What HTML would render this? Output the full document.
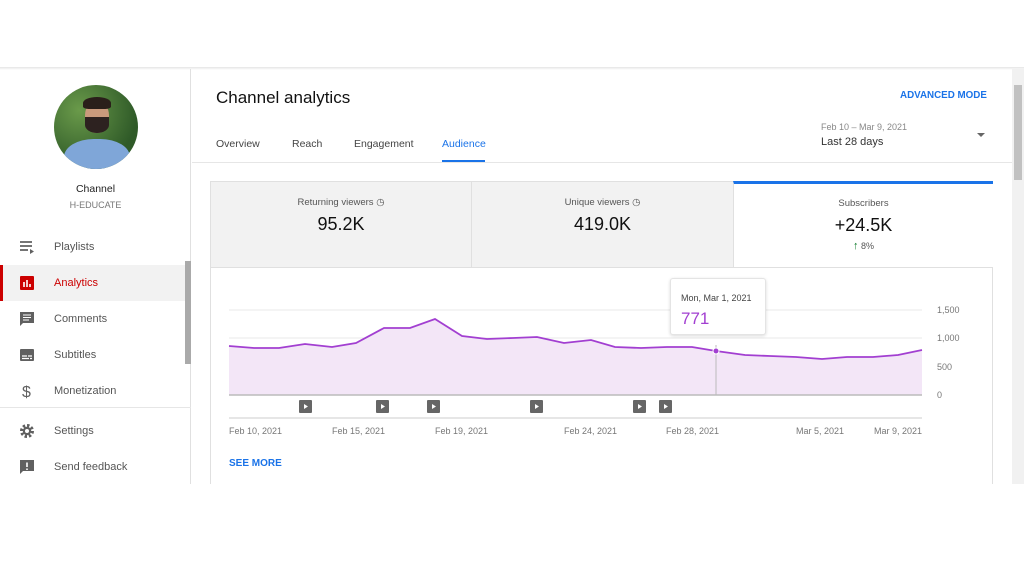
<!DOCTYPE html>
<html><head><meta charset="utf-8"><style>
*{box-sizing:border-box;margin:0;padding:0}
body{width:1024px;height:576px;background:#fff;font-family:"Liberation Sans",sans-serif;position:relative;overflow:hidden;color:#0d0d0d}
.top{position:absolute;left:0;top:67px;width:1024px;height:3px;background:linear-gradient(#e4e4e4,#fff)}
.side{position:absolute;left:0;top:69px;width:191px;height:415px;border-right:1px solid #e0e0e0}
.av{position:absolute;left:54px;top:85px;width:84px;height:84px;border-radius:50%;overflow:hidden;background:radial-gradient(circle at 30% 30%,#6a9a4a,#2f5a28 70%)}
.av .face{position:absolute;left:31px;top:16px;width:24px;height:32px;border-radius:45%;background:#c99a7c}
.av .hair{position:absolute;left:29px;top:12px;width:28px;height:12px;border-radius:50% 50% 20% 20%;background:#2a1f1a}
.av .beard{position:absolute;left:31px;top:32px;width:24px;height:16px;border-radius:0 0 50% 50%;background:#2d2220}
.av .body{position:absolute;left:10px;top:54px;width:66px;height:40px;border-radius:45% 45% 0 0;background:#7fa6d8}
.nm{position:absolute;left:0;width:191px;text-align:center}
.item{position:absolute;left:0;width:185px;height:36px;font-size:11px;color:#555}
.item span{position:absolute;left:54px;top:12px}
.item svg{position:absolute;left:19px;top:10px}
.tab{position:absolute;top:138px;font-size:10.5px;color:#444}
.card{position:absolute;left:210px;top:181px;width:783px;height:303px;border:1px solid #e0e0e0;border-bottom:none}
.m{position:absolute;top:0;height:86px;text-align:center;border-bottom:1px solid #e0e0e0}
.m .l{font-size:9.5px;color:#555;margin-top:15px}
.m .v{font-size:18px;color:#111;margin-top:6px}
.ax{position:absolute;font-size:9px;color:#777}
</style></head><body>
<div class="top"></div>
<div class="side"></div>
<div class="av"><div class="body"></div><div class="face"></div><div class="hair"></div><div class="beard"></div></div>
<div class="nm" style="top:183px;font-size:10.5px;color:#222">Channel</div>
<div class="nm" style="top:200px;font-size:9px;color:#777">H-EDUCATE</div>

<div class="item" style="top:229px"><svg width="16" height="16"><path d="M1 3h12M1 7h12M1 11h8" stroke="#606060" stroke-width="1.8"/><path d="M11 10l4 2.5-4 2.5z" fill="#606060"/></svg><span>Playlists</span></div>
<div class="item" style="top:265px;background:#f2f2f2"><div style="position:absolute;left:0;top:0;width:3px;height:36px;background:#cc0000"></div><svg width="16" height="16"><rect x="1" y="1" width="14" height="14" rx="1" fill="#cc0000"/><path d="M5 7v5M8 5v7M11 9v3" stroke="#fff" stroke-width="1.6"/></svg><span style="color:#cc0000">Analytics</span></div>
<div class="item" style="top:301px"><svg width="16" height="16"><path d="M1 1h14v11H4l-3 3z" fill="#606060"/><path d="M4 4h8M4 6.5h8M4 9h6" stroke="#fff" stroke-width="1"/></svg><span>Comments</span></div>
<div class="item" style="top:337px"><svg width="16" height="16"><rect x="1" y="2" width="14" height="12" rx="1" fill="#606060"/><path d="M3 9h5M9 9h4M3 11.5h7M11 11.5h2" stroke="#fff" stroke-width="1.2"/></svg><span>Subtitles</span></div>
<div class="item" style="top:373px"><svg width="16" height="16"><text x="3" y="14" font-size="16" fill="#606060" font-family="Liberation Sans">$</text></svg><span>Monetization</span></div>
<div style="position:absolute;left:0;top:407px;width:191px;height:1px;background:#e6e6e6"></div>
<div class="item" style="top:413px"><svg width="16" height="16"><circle cx="8" cy="8" r="5.5" fill="none" stroke="#606060" stroke-width="3" stroke-dasharray="2.4 1.9"/><circle cx="8" cy="8" r="4.2" fill="#606060"/><circle cx="8" cy="8" r="2" fill="#fff"/></svg><span>Settings</span></div>
<div class="item" style="top:449px"><svg width="16" height="16"><path d="M1 1h14v11H4l-3 3z" fill="#606060"/><path d="M8 3.5v4.5M8 9.5v1.5" stroke="#fff" stroke-width="1.6"/></svg><span>Send feedback</span></div>
<div style="position:absolute;left:185px;top:261px;width:6px;height:103px;background:#aaa"></div>

<div style="position:absolute;left:216px;top:88px;font-size:17px;color:#111">Channel analytics</div>
<div style="position:absolute;left:900px;top:90px;font-size:9.8px;color:#1a73e8;font-weight:bold">ADVANCED MODE</div>
<div class="tab" style="left:216px">Overview</div>
<div class="tab" style="left:292px">Reach</div>
<div class="tab" style="left:354px">Engagement</div>
<div class="tab" style="left:442px;color:#1a73e8">Audience</div>
<div style="position:absolute;left:442px;top:160px;width:43px;height:2px;background:#1a73e8"></div>
<div style="position:absolute;left:192px;top:162px;width:820px;height:1px;background:#e6e6e6"></div>
<div style="position:absolute;left:821px;top:122px;font-size:9px;color:#888">Feb 10 – Mar 9, 2021</div>
<div style="position:absolute;left:821px;top:136px;font-size:11px;color:#333">Last 28 days</div>
<svg style="position:absolute;left:976px;top:132px" width="10" height="6"><path d="M1 1h8l-4 4z" fill="#666"/></svg>

<div style="position:absolute;left:1012px;top:69px;width:12px;height:415px;background:#f1f1f1"></div>
<div style="position:absolute;left:1014px;top:85px;width:8px;height:95px;background:#c1c1c1"></div>

<div class="card">
 <div class="m" style="left:0;width:261px;background:#f2f2f2;border-right:1px solid #e0e0e0"><div class="l">Returning viewers ◷</div><div class="v">95.2K</div></div>
 <div class="m" style="left:261px;width:261px;background:#f2f2f2"><div class="l">Unique viewers ◷</div><div class="v">419.0K</div></div>
 <div class="m" style="left:522px;width:260px;background:#fff;border-left:1px solid #e0e0e0;border-top:3px solid #1a73e8;top:-1px;height:87px"><div class="l" style="margin-top:14px">Subscribers</div><div class="v">+24.5K</div><div style="font-size:9px;color:#555;margin-top:4px"><span style="color:#0b7a29;font-weight:bold;font-size:11px">↑</span> 8%</div></div>
</div>

<svg style="position:absolute;left:0;top:0" width="1024" height="576">
 <path d="M229 310H922M229 338H922M229 367H922" stroke="#e8e8e8" stroke-width="1"/>
 <path d="M229 346L254 348L279 348L305 344L332 347L356 343L384 328L410 328L435 319L462 336L487 339L513 338L537 337L564 343L591 340L615 347L641 348L667 347L692 347L716 351L745 355L770 356L796 357L822 359L847 357L873 357L898 355L922 350V395H229Z" fill="#f3e6f7"/>
 <path d="M229 346L254 348L279 348L305 344L332 347L356 343L384 328L410 328L435 319L462 336L487 339L513 338L537 337L564 343L591 340L615 347L641 348L667 347L692 347L716 351L745 355L770 356L796 357L822 359L847 357L873 357L898 355L922 350" fill="none" stroke="#a23fd1" stroke-width="1.8"/>
 <path d="M716 345V395" stroke="#bbb"/>
 <path d="M229 395H922" stroke="#bbb" stroke-width="1.5"/>
 <path d="M229 418H922" stroke="#ddd" stroke-width="1.5"/>
 <circle cx="716" cy="351" r="3" fill="#a23fd1" stroke="#fff"/>
 <g fill="#666">
  <rect x="299" y="400" width="13" height="13" rx="1"/><rect x="376" y="400" width="13" height="13" rx="1"/><rect x="427" y="400" width="13" height="13" rx="1"/><rect x="530" y="400" width="13" height="13" rx="1"/><rect x="633" y="400" width="13" height="13" rx="1"/><rect x="659" y="400" width="13" height="13" rx="1"/>
 </g>
 <g fill="#fff">
  <path d="M304 404l4 2.5-4 2.5z"/><path d="M381 404l4 2.5-4 2.5z"/><path d="M432 404l4 2.5-4 2.5z"/><path d="M535 404l4 2.5-4 2.5z"/><path d="M638 404l4 2.5-4 2.5z"/><path d="M664 404l4 2.5-4 2.5z"/>
 </g>
</svg>
<div class="ax" style="left:937px;top:305px">1,500</div>
<div class="ax" style="left:937px;top:333px">1,000</div>
<div class="ax" style="left:937px;top:362px">500</div>
<div class="ax" style="left:937px;top:390px">0</div>
<div class="ax" style="left:229px;top:426px">Feb 10, 2021</div>
<div class="ax" style="left:332px;top:426px">Feb 15, 2021</div>
<div class="ax" style="left:435px;top:426px">Feb 19, 2021</div>
<div class="ax" style="left:564px;top:426px">Feb 24, 2021</div>
<div class="ax" style="left:666px;top:426px">Feb 28, 2021</div>
<div class="ax" style="left:796px;top:426px">Mar 5, 2021</div>
<div class="ax" style="left:874px;top:426px">Mar 9, 2021</div>
<div style="position:absolute;left:229px;top:458px;font-size:10px;color:#1a73e8;font-weight:bold">SEE MORE</div>

<div style="position:absolute;left:670px;top:278px;width:96px;height:57px;background:#fff;border:1px solid #e4e4e4;border-radius:3px;box-shadow:0 1px 3px rgba(0,0,0,.15)">
 <div style="position:absolute;left:10px;top:14px;font-size:9px;color:#444">Mon, Mar 1, 2021</div>
 <div style="position:absolute;left:10px;top:30px;font-size:17px;color:#a23fd1">771</div>
</div>
</body></html>
